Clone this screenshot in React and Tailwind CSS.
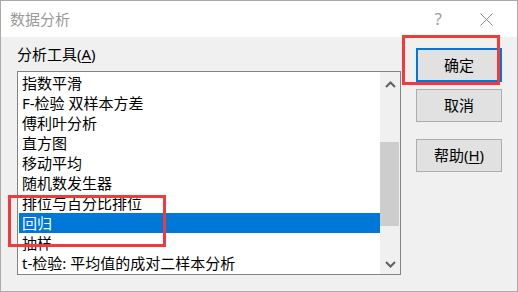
import React from 'react';

const tools = [
  '指数平滑',
  'F-检验 双样本方差',
  '傅利叶分析',
  '直方图',
  '移动平均',
  '随机数发生器',
  '排位与百分比排位',
  '回归',
  '抽样',
  't-检验: 平均值的成对二样本分析',
];

const font = { fontFamily: '"Noto Sans", "Noto Sans CJK SC", sans-serif' };

const Chevron = ({ up }) => (
  <svg width="11" height="7" viewBox="0 0 11 7" className="block">
    <path
      d={up ? 'M1 6 L5.5 1.5 L10 6' : 'M1 1 L5.5 5.5 L10 1'}
      fill="none"
      stroke="#606060"
      strokeWidth="2"
    />
  </svg>
);

export default function App() {
  const selected = 7;

  return (
    <div
      className="relative w-[518px] h-[292px] overflow-hidden bg-[#f0f0f0] border border-[#aaaaaa] text-black"
      style={font}
    >
      {/* title bar */}
      <div className="h-[36px] bg-white flex items-center pl-[9px]">
        <span className="text-[15px] text-[#9a9a9a] leading-none">数据分析</span>
        <span className="ml-auto text-[17px] text-[#a0a0a0] leading-none mr-[38px] mt-[-2px]">?</span>
        <svg width="13" height="13" viewBox="0 0 13 13" className="mr-[24px]">
          <path d="M0.5 0.5 L12.5 12.5 M12.5 0.5 L0.5 12.5" stroke="#8a8a8a" strokeWidth="1" />
        </svg>
      </div>

      <div className="flex pl-[16px]">
        {/* left column */}
        <div className="flex flex-col">
          <div className="pt-[7px] h-[34px] text-[15px] leading-[20px]">
            分析工具(<span className="underline underline-offset-2">A</span>)
          </div>
          <div className="w-[384px] h-[204px] border border-[#838383] bg-white flex">
            <div className="flex-1 py-[1px] pl-[1px]">
              {tools.map((t, i) => (
                <div
                  key={t}
                  className={`h-[20px] pl-[3px] text-[15px] leading-[20px] whitespace-nowrap ${
                    i === selected ? 'bg-[#0078d7] text-white' : ''
                  }`}
                >
                  {t}
                </div>
              ))}
            </div>
            <div className="w-[20px] bg-[#f0f0f0] flex flex-col">
              <div className="h-[20px] flex items-end justify-center pb-[4px]">
                <Chevron up />
              </div>
              <div className="h-[50px]" />
              <div className="h-[84px] w-[19px] bg-[#cdcdcd]" />
              <div className="flex-1 flex items-end justify-center pb-[6px]">
                <Chevron />
              </div>
            </div>
          </div>
        </div>

        {/* right column */}
        <div className="flex flex-col ml-[15px] mt-[11px]">
          <button className="w-[86px] h-[34px] bg-[#e1e1e1] border-2 border-[#0078d7] text-[15px] leading-none">
            确定
          </button>
          <button className="mt-[7px] w-[86px] h-[33px] bg-[#e1e1e1] border border-[#adadad] text-[15px] leading-none">
            取消
          </button>
          <button className="mt-[17px] w-[86px] h-[33px] bg-[#e1e1e1] border border-[#adadad] text-[15px] leading-none">
            帮助(<span className="underline underline-offset-2">H</span>)
          </button>
        </div>
      </div>

      {/* red highlight boxes */}
      <div className="absolute left-[401px] top-[34px] w-[98px] h-[50px] border-[3px] border-[#f23a3a]" />
      <div className="absolute left-[7px] top-[194px] w-[158px] h-[52px] border-[3px] border-[#f23a3a]" />
    </div>
  );
}
